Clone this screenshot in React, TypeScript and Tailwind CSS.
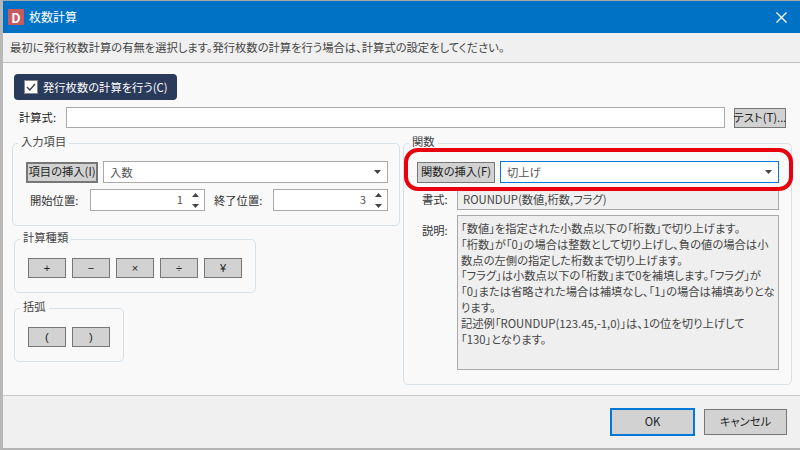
const font = "[font-family:'Noto_Sans_CJK_JP','Noto_Sans_CJK_SC',sans-serif] [font-feature-settings:'palt']";

function Caret() {
  return (
    <svg width="7" height="4" viewBox="0 0 7 4" className="shrink-0">
      <path d="M0 0H7L3.5 4Z" fill="#444" />
    </svg>
  );
}

function Spinner() {
  return (
    <div className="flex flex-col items-center gap-[7px] shrink-0">
      <svg width="7" height="4" viewBox="0 0 7 4">
        <path d="M3.5 0L7 4H0Z" fill="#444" />
      </svg>
      <svg width="7" height="4" viewBox="0 0 7 4">
        <path d="M0 0H7L3.5 4Z" fill="#444" />
      </svg>
    </div>
  );
}

function SpinBox({ value }: { value: string }) {
  return (
    <div className="flex items-center h-[22px] w-[115px] bg-white border border-[#a9a9a9] pr-[5px]">
      <span className="flex-1 text-right pr-[9px] text-[#555] leading-none">{value}</span>
      <Spinner />
    </div>
  );
}

function GrayButton({ label, className }: { label: string; className: string }) {
  return (
    <button className={`flex items-center justify-center bg-[#d2d2d2] border-[#777] text-[#222] leading-none whitespace-nowrap ${className}`}>
      {label}
    </button>
  );
}

function Group({ title, className, children }: { title: string; className: string; children: React.ReactNode }) {
  return (
    <fieldset className={`border border-[#d6e0e8] rounded-[5px] ${className}`}>
      <legend className="ml-[5px] px-[3px] h-[16px] leading-[13px] text-[#444]">{title}</legend>
      <div className="pl-[13px]">{children}</div>
    </fieldset>
  );
}

const description = [
  '「数値」を指定された小数点以下の「桁数」で切り上げます。',
  '「桁数」が「0」の場合は整数として切り上げし、負の値の場合は小',
  '数点の左側の指定した桁数まで切り上げます。',
  '「フラグ」は小数点以下の「桁数」まで0を補填します。「フラグ」が',
  '「0」または省略された場合は補填なし、「1」の場合は補填ありとな',
  'ります。',
  '記述例「ROUNDUP(123.45,-1,0)」は、1の位を切り上げして',
  '「130」となります。',
];

export default function App() {
  return (
    <div className={`w-[800px] h-[450px] flex flex-col overflow-hidden bg-[#f9f9f9] border-t border-b-2 border-l-[3px] border-t-[#a8a8a8] border-b-[#b4b4b4] border-l-[#b8b8b8] text-[11.3px] ${font}`}>
      <div className="h-[32px] shrink-0 flex items-center bg-[#0072c6] pl-[5px] pr-[13px]">
        <div className="w-[16px] h-[16px] flex items-center justify-center bg-[#c85a5e] rounded-[1px] text-white font-bold text-[13px] leading-none">D</div>
        <span className="ml-[5px] text-white text-[12px]">枚数計算</span>
        <svg width="11" height="11" viewBox="0 0 11 11" className="ml-auto">
          <path d="M0.5 0.5L10.5 10.5M10.5 0.5L0.5 10.5" stroke="#fff" strokeWidth="1.3" />
        </svg>
      </div>

      <div className="h-[30px] shrink-0 flex items-center pl-[7px] bg-[#f0f0f0] border-b border-[#c0c0c0] text-[#444]">
        最初に発行枚数計算の有無を選択します。発行枚数の計算を行う場合は、計算式の設定をしてください。
      </div>

      <div className="flex-1 flex flex-col pt-[11px] pl-[9px] pr-[8px]">
        <div className="ml-[2px] w-[163px] h-[26px] flex items-center pl-[10px] bg-[#2a3a5a] rounded-[4px] text-white">
          <div className="w-[14px] h-[14px] flex items-center justify-center bg-white border border-[#888]">
            <svg width="10" height="8" viewBox="0 0 10 8">
              <path d="M1 4L3.8 7L9 1" fill="none" stroke="#444" strokeWidth="1.4" />
            </svg>
          </div>
          <span className="ml-[5px]">発行枚数の計算を行う(C)</span>
        </div>

        <div className="mt-[7px] flex items-center h-[21px]">
          <span className="ml-[7px] w-[47px] text-[#222]">計算式:</span>
          <div className="w-[659px] h-[21px] bg-white border border-[#a9a9a9]"></div>
          <GrayButton label="テスト(T)..." className="ml-[9px] w-[52px] h-[20px] border" />
        </div>

        <div className="mt-[7px] flex">
          <div className="w-[391px] flex flex-col shrink-0">
            <Group title="入力項目" className="w-[388px] h-[91px]">
              <div className="mt-[10px] flex items-center">
                <GrayButton label="項目の挿入(I)" className="w-[72px] h-[21px] border-2" />
                <div className="ml-[5px] w-[285px] h-[22px] flex items-center justify-between bg-white border border-[#a9a9a9] pl-[6px] pr-[6px] text-[#555]">
                  入数
                  <Caret />
                </div>
              </div>
              <div className="mt-[6px] flex items-center">
                <span className="ml-[4px] w-[60px] text-[#333]">開始位置:</span>
                <SpinBox value="1" />
                <span className="ml-[9px] w-[59px] text-[#333]">終了位置:</span>
                <SpinBox value="3" />
              </div>
            </Group>

            <Group title="計算種類" className="ml-[2px] mt-[5px] w-[242px] h-[62px]">
              <div className="mt-[11px] flex gap-[6px] text-[11px] [font-family:'Liberation_Sans',sans-serif]">
                {['+', '−', '×', '÷', '¥'].map((s) => (
                  <GrayButton key={s} label={s} className="w-[38px] h-[20px] border pt-[1px]" />
                ))}
              </div>
            </Group>

            <Group title="括弧" className="ml-[2px] mt-[7px] w-[110px] h-[62px]">
              <div className="mt-[11px] flex gap-[6px] [font-family:'Liberation_Sans',sans-serif]">
                {['(', ')'].map((s) => (
                  <GrayButton key={s} label={s} className="w-[38px] h-[20px] border pt-[1px]" />
                ))}
              </div>
            </Group>
          </div>

          <Group title="関数" className="w-[389px] h-[250px]">
            <div className="relative mt-[10px] flex items-center">
              <GrayButton label="関数の挿入(F)" className="w-[78px] h-[21px] border" />
              <div className="ml-[5px] w-[279px] h-[22px] flex items-center justify-between bg-white border border-[#0078d7] pl-[6px] pr-[6px] text-[#555]">
                切上げ
                <Caret />
              </div>
              <div className="absolute left-[-13px] top-[-13px] w-[389px] h-[43px] border-4 border-[#e8000f] rounded-[14px]"></div>
            </div>
            <div className="mt-[6px] flex items-center">
              <span className="ml-[5px] w-[35px] text-[#333]">書式:</span>
              <div className="w-[322px] h-[21px] flex items-center pl-[5px] bg-[#efefef] border border-[#a9a9a9] text-[#444]">
                ROUNDUP(数値,桁数,フラグ)
              </div>
            </div>
            <div className="mt-[5px] flex items-start">
              <span className="ml-[5px] w-[35px] mt-[7px] text-[#333]">説明:</span>
              <div className="w-[322px] h-[155px] pt-[5px] pl-[3px] bg-[#efefef] border border-[#a9a9a9] text-[#444] leading-[15.8px] whitespace-nowrap">
                {description.map((line) => (
                  <div key={line}>{line}</div>
                ))}
              </div>
            </div>
          </Group>
        </div>
      </div>

      <div className="h-[53px] shrink-0 flex items-center justify-end pr-[13px] bg-[#f0f0f0] border-t border-[#c8c8c8]">
        <button className="w-[85px] h-[28px] bg-[#d2d2d2] border-[2px] border-[#0078d7] text-[#222] leading-none">OK</button>
        <button className="ml-[9px] w-[83px] h-[26px] bg-[#d2d2d2] border border-[#777] text-[#222] leading-none">キャンセル</button>
      </div>
    </div>
  );
}
